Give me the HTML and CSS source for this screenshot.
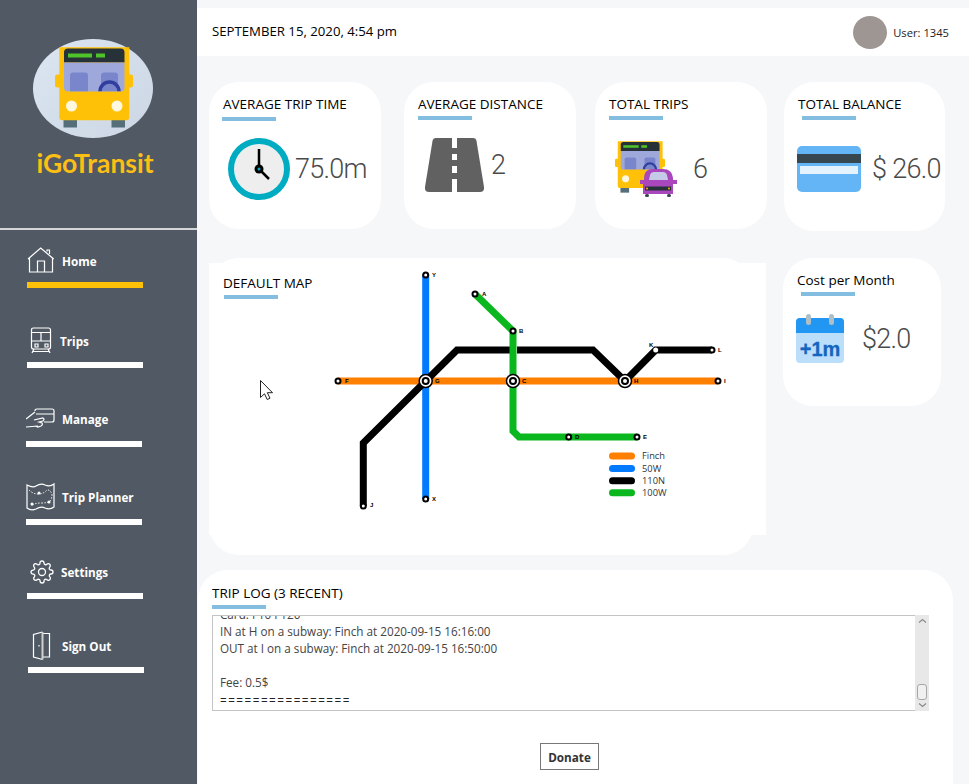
FILE: index.html
```html
<!DOCTYPE html>
<html lang="en">
<head>
<meta charset="utf-8">
<title>iGoTransit</title>
<link rel="stylesheet" href="styles.css">
</head>
<body>
<svg class="defs" width="0" height="0" aria-hidden="true">
  <defs>
    <clipPath id="bus-window"><path d="M64 63h60.500v25q0 4-4 4H68q-4 0-4-4z"/></clipPath>
    <symbol id="bus" viewBox="55 47.500 78 81">
      <rect x="55" y="75" width="8" height="13" rx="2" fill="#ffc107"/>
      <rect x="125" y="75" width="8" height="13" rx="2" fill="#ffc107"/>
      <rect x="63.500" y="118" width="13.500" height="10" fill="#546e7a"/>
      <rect x="111.500" y="118" width="13.500" height="10" fill="#546e7a"/>
      <path d="M59.300 47.700h70v70q0 3-3 3h-64q-3 0-3-3z" fill="#ffc107"/>
      <path d="M64 63v-10q0-4 4-4h52.500q4 0 4 4v10z" fill="#263238"/>
      <rect x="68" y="54" width="24" height="4" fill="#4ec32a"/>
      <rect x="96" y="54" width="9" height="4" fill="#4ec32a"/>
      <path d="M64 63h60.500v25q0 4-4 4H68q-4 0-4-4z" fill="#9fa8da"/>
      <g clip-path="url(#bus-window)">
        <rect x="70" y="73" width="18" height="24" rx="3" fill="#7986cb"/>
        <rect x="101" y="73" width="17" height="24" rx="3" fill="#7986cb"/>
        <circle cx="109.500" cy="92" r="9.500" fill="none" stroke="#303f9f" stroke-width="3.500"/>
      </g>
      <circle cx="71.500" cy="106.500" r="5.500" fill="#fff8e1"/>
      <circle cx="117" cy="106.500" r="5.500" fill="#fff8e1"/>
    </symbol>
  </defs>
</svg>

<div class="app">
  <aside class="sidebar">
    <div class="brand">
      <div class="logo-disc">
        <svg class="logo-bus" width="78" height="81"><use href="#bus"/></svg>
      </div>
      <div class="brand-name">iGoTransit</div>
    </div>
    <nav class="nav">
      <a class="nav-item nav-item--home">
        <span class="nav-row">
          <svg class="nav-icon" viewBox="0 0 30 30" width="30" height="30"><path d="M1 13 13.700 2 26.700 13M2.500 12V26h23V12M10.500 26V15h7v11M20 5.500V4h2.500v4"/></svg>
          <span class="nav-label">Home</span>
        </span>
        <span class="nav-bar nav-bar--active"></span>
      </a>
      <a class="nav-item nav-item--trips">
        <span class="nav-row">
          <svg class="nav-icon" viewBox="0 0 30 30" width="30" height="30"><path d="M6.500 2h15q2 0 2 2v17q0 2-2 2h-15q-2 0-2-2V4q0-2 2-2zM4.500 6.500h19M4.500 15h19M14 6.500V15M8 18h3v3H8zM18 18h3v3h-3zM7 23l-2 4M21 23l2 4M6 25.500h16"/></svg>
          <span class="nav-label nav-label--tight">Trips</span>
        </span>
        <span class="nav-bar"></span>
      </a>
      <a class="nav-item nav-item--manage">
        <span class="nav-row nav-row--lift">
          <svg class="nav-icon" viewBox="0 0 30 30" width="30" height="30"><path d="M0 15 9 8M9 7q0-2 2-2h15q2 0 2 2v9q0 2-2 2H18M10 10h18M0 23l12-1M8 16l9-2q2 1 0 3l-4 1 3 1q1 2-1 3l-3 1-3-1"/></svg>
          <span class="nav-label nav-label--wide">Manage</span>
        </span>
        <span class="nav-bar"></span>
      </a>
      <a class="nav-item nav-item--planner">
        <span class="nav-row nav-row--lift">
          <svg class="nav-icon" viewBox="0 0 30 30" width="30" height="30"><path d="M1 3q6 3 9 1 5-3 9-1 5 2 9-1v23q-4 3-9 1-4-2-9 1-5 2-9-1z"/><path class="nav-dots" d="M3 8q4 4 9 4t8-3 6 3q0 5-2 7t-9 2-10 3"/><circle class="nav-dot" cx="13" cy="11" r="1.500"/><circle class="nav-dot" cx="6" cy="22" r="1.500"/><circle class="nav-dot" cx="23" cy="20" r="1.500"/></svg>
          <span class="nav-label nav-label--wide">Trip Planner</span>
        </span>
        <span class="nav-bar"></span>
      </a>
      <a class="nav-item nav-item--settings">
        <span class="nav-row">
          <svg class="nav-icon nav-icon--gear" viewBox="-3 -3 30 30" width="30" height="30"><circle cx="12" cy="12" r="3.500"/><path d="M19.400 15a1.650 1.650 0 0 0 .33 1.820l.06.06a2 2 0 0 1 0 2.830 2 2 0 0 1-2.830 0l-.06-.06a1.650 1.650 0 0 0-1.820-.33 1.650 1.650 0 0 0-1 1.510V21a2 2 0 0 1-2 2 2 2 0 0 1-2-2v-.09A1.650 1.650 0 0 0 9 19.400a1.650 1.650 0 0 0-1.820.33l-.06.06a2 2 0 0 1-2.830 0 2 2 0 0 1 0-2.830l.06-.06a1.650 1.650 0 0 0 .33-1.820 1.650 1.650 0 0 0-1.510-1H3a2 2 0 0 1-2-2 2 2 0 0 1 2-2h.09A1.650 1.650 0 0 0 4.600 9a1.650 1.650 0 0 0-.33-1.820l-.06-.06a2 2 0 0 1 0-2.830 2 2 0 0 1 2.830 0l.06.06a1.650 1.650 0 0 0 1.820.33H9a1.650 1.650 0 0 0 1-1.510V3a2 2 0 0 1 2-2 2 2 0 0 1 2 2v.09a1.650 1.650 0 0 0 1 1.510 1.650 1.650 0 0 0 1.820-.33l.06-.06a2 2 0 0 1 2.830 0 2 2 0 0 1 0 2.830l-.06.06a1.650 1.650 0 0 0-.33 1.820V9a1.650 1.650 0 0 0 1.510 1H21a2 2 0 0 1 2 2 2 2 0 0 1-2 2h-.09a1.650 1.650 0 0 0-1.510 1z"/></svg>
          <span class="nav-label nav-label--snug">Settings</span>
        </span>
        <span class="nav-bar"></span>
      </a>
      <a class="nav-item nav-item--signout">
        <span class="nav-row">
          <svg class="nav-icon" viewBox="0 0 30 30" width="30" height="30"><path d="M14.500 1 5.500 3.500V26l9 2.500M15 2.500h6.500V26H15M11 14v1.500"/><path class="nav-thick" d="M14.500 1V28.500"/></svg>
          <span class="nav-label nav-label--snug">Sign Out</span>
        </span>
        <span class="nav-bar"></span>
      </a>
    </nav>
  </aside>

  <main class="main">
    <header class="topbar">
      <span class="date">SEPTEMBER 15, 2020, 4:54 pm</span>
      <span class="avatar"></span>
      <span class="user">User: 1345</span>
    </header>

    <section class="stats">
      <article class="card card--time">
        <h2 class="card-title">AVERAGE TRIP TIME</h2>
        <div class="rule rule--time"></div>
        <div class="card-body body--time">
          <svg viewBox="0 0 62 62" width="62" height="62">
            <circle cx="31" cy="31" r="28" fill="#eeeeee" stroke="#00acc1" stroke-width="6"/>
            <path d="M31 31V11M31 31 41 41" stroke="#000" stroke-width="2.500" fill="none"/>
            <circle cx="31" cy="31" r="4.500" fill="#000"/>
            <circle cx="31" cy="31" r="1.500" fill="#00acc1"/>
          </svg>
          <span class="value">75.0m</span>
        </div>
      </article>
      <article class="card card--dist">
        <h2 class="card-title">AVERAGE DISTANCE</h2>
        <div class="rule"></div>
        <div class="card-body body--dist">
          <svg viewBox="0 0 59 54" width="59" height="54">
            <path d="M11 0H48q3 0 3.500 3L59 49q.5 5-4 5H4q-4.500 0-4-5L7.500 3Q8 0 11 0z" fill="#616161"/>
            <path d="M27 0h5v10h-5zM27 16h5v6h-5zM27 28h5v7h-5zM27 41h5v13h-5z" fill="#fff"/>
          </svg>
          <span class="value">2</span>
        </div>
      </article>
      <article class="card card--trips">
        <h2 class="card-title">TOTAL TRIPS</h2>
        <div class="rule"></div>
        <div class="card-body body--trips">
          <svg viewBox="0 0 62 56" width="62" height="56">
            <use href="#bus" width="50" height="52"/>
            <path d="M29 39V37q0-9 9-9h10q9 0 10 9v2z" fill="#ab47bc"/>
            <path d="M34 39l1-5q1-3 4-3h9q3 0 4 3l1 5z" fill="#c5cae9"/>
            <rect x="25" y="39" width="37" height="4" fill="#ab47bc"/>
            <rect x="28" y="41" width="30" height="12" fill="#ab47bc"/>
            <rect x="30" y="45.500" width="26" height="4" fill="#263238"/>
            <circle cx="32" cy="47.500" r="1" fill="#ffb300"/>
            <circle cx="54" cy="47.500" r="1" fill="#ffb300"/>
            <rect x="30" y="53" width="4" height="3" rx="1.500" fill="#37474f"/>
            <rect x="52" y="53" width="4" height="3" rx="1.500" fill="#37474f"/>
          </svg>
          <span class="value">6</span>
        </div>
      </article>
      <article class="card card--balance">
        <h2 class="card-title">TOTAL BALANCE</h2>
        <div class="rule rule--inset"></div>
        <div class="card-body body--balance">
          <svg viewBox="0 0 64 46" width="64" height="46">
            <rect width="64" height="46" rx="5" fill="#64b5f6"/>
            <rect y="8" width="64" height="9" fill="#37474f"/>
            <rect x="3" y="20" width="58" height="8" fill="#e3f2fd"/>
          </svg>
          <span class="value">$ 26.0</span>
        </div>
      </article>
    </section>

    <section class="middle">
      <article class="card card--map">
        <h2 class="card-title">DEFAULT MAP</h2>
        <div class="rule rule--map"></div>
        <svg class="map" viewBox="0 0 557 272" width="557" height="272">
          <g transform="translate(-209 -263)" fill="none" stroke-linejoin="miter">
            <path d="M425.700 275V499" stroke="#007bff" stroke-width="7"/>
            <path d="M338 381H718" stroke="#ff7f00" stroke-width="7"/>
            <path d="M363.300 506V443L457 350H593L625 381 655.700 350H712" stroke="#000" stroke-width="7"/>
            <path d="M510 346h7v8h-7z" fill="#fff" stroke="none"/>
            <path d="M475 294 513 331V431L519 437H637" stroke="#0ab71e" stroke-width="7"/>
            <g fill="#fff" stroke="#000" stroke-width="2">
              <circle cx="425.700" cy="275" r="2.500"/>
              <circle cx="425.700" cy="499" r="2.500"/>
              <circle cx="475" cy="294" r="2.500"/>
              <circle cx="513" cy="331" r="2.500"/>
              <circle cx="338" cy="381" r="2.500"/>
              <circle cx="363.300" cy="506" r="2.500"/>
              <circle cx="712" cy="350" r="2.500"/>
              <circle cx="718" cy="381" r="2.500"/>
              <circle cx="568.700" cy="437" r="2.500"/>
              <circle cx="637" cy="437" r="2.500"/>
            </g>
            <circle cx="655.700" cy="350" r="2.500" fill="#fff"/>
            <g fill="#fff" stroke="#000">
              <circle cx="425.700" cy="381" r="6.500" stroke-width="1.500"/>
              <circle cx="513" cy="381" r="6.500" stroke-width="1.500"/>
              <circle cx="625" cy="381" r="6.500" stroke-width="1.500"/>
              <circle cx="425.700" cy="381" r="3" stroke-width="2"/>
              <circle cx="513" cy="381" r="3" stroke-width="2"/>
              <circle cx="625" cy="381" r="3" stroke-width="2"/>
            </g>
            <g class="station-label">
              <text x="432" y="276.500">Y</text>
              <text x="482" y="296">A</text>
              <text x="519" y="333">B</text>
              <text x="345" y="383">F</text>
              <text x="435" y="383">G</text>
              <text x="522" y="383">C</text>
              <text x="634" y="383">H</text>
              <text x="370" y="507">J</text>
              <text x="432" y="501">X</text>
              <text x="718" y="352">L</text>
              <text x="724" y="383">I</text>
              <text x="575" y="439">D</text>
              <text x="643" y="439">E</text>
              <text x="649" y="347">K</text>
            </g>
            <g stroke-width="7" stroke-linecap="round">
              <path d="M612.500 456H631.500" stroke="#ff7f00"/>
              <path d="M612.500 468.500H631.500" stroke="#007bff"/>
              <path d="M612.500 480.700H631.500" stroke="#000"/>
              <path d="M612.500 492.700H631.500" stroke="#0ab71e"/>
            </g>
            <g class="legend-label">
              <text x="642" y="459">Finch</text>
              <text x="642" y="471.500">50W</text>
              <text x="642" y="484">110N</text>
              <text x="642" y="496">100W</text>
            </g>
            <path d="M260.500 380.500V397.500L264.500 393.800 267.200 399.500 270 398.200 267.300 392.700H272.500z" fill="#fff" stroke="#222" stroke-width="1" stroke-linejoin="round"/>
          </g>
        </svg>
      </article>
      <article class="card card--cost">
        <h2 class="card-title">Cost per Month</h2>
        <div class="rule rule--inset"></div>
        <div class="card-body body--cost">
          <svg viewBox="0 0 48 49" width="48" height="49">
            <path d="M4 4H44q4 0 4 4V45q0 4-4 4H4q-4 0-4-4V8q0-4 4-4z" fill="#bbdefb"/>
            <path d="M4 4H44q4 0 4 4V19H0V8q0-4 4-4z" fill="#2196f3"/>
            <rect x="10" y="0" width="5" height="11" rx="2.500" fill="#b0bec5"/>
            <rect x="33" y="0" width="5" height="11" rx="2.500" fill="#b0bec5"/>
            <text class="cal-text" x="24" y="42" text-anchor="middle">+1m</text>
          </svg>
          <span class="value">$2.0</span>
        </div>
      </article>
    </section>

    <section class="log">
      <h2 class="card-title">TRIP LOG (3 RECENT)</h2>
      <div class="rule"></div>
      <div class="log-box">
        <div class="log-text">
          <div class="log-line log-line--clipped">Card: F10 F120</div>
          <div class="log-line">IN at H on a subway: Finch at 2020-09-15 16:16:00</div>
          <div class="log-line">OUT at I on a subway: Finch at 2020-09-15 16:50:00</div>
          <div class="log-line">&nbsp;</div>
          <div class="log-line">Fee: 0.5$</div>
          <div class="log-line log-line--rule">================</div>
        </div>
        <div class="scrollbar">
          <svg viewBox="0 0 13 12" width="13" height="12"><path d="M3 7.500 6.500 4.500 10 7.500" fill="none" stroke="#8a8a8a" stroke-width="1.200"/></svg>
          <div class="scroll-thumb"></div>
          <svg viewBox="0 0 13 11" width="13" height="11"><path d="M3 3.500 6.500 6.500 10 3.500" fill="none" stroke="#8a8a8a" stroke-width="1.200"/></svg>
        </div>
      </div>
      <div class="log-actions"><button class="donate" type="button">Donate</button></div>
    </section>
  </main>
</div>
</body>
</html>
```

FILE: styles.css
```css
* { box-sizing: border-box; }
html, body { margin: 0; height: 100%; }
body {
  width: 969px;
  height: 784px;
  overflow: hidden;
  background: #f6f7f9;
  font-family: "Open Sans", "Noto Sans", sans-serif;
  color: #000;
}
.defs { position: absolute; }
.app { display: flex; height: 784px; }

/* Sidebar */
.sidebar {
  width: 197px;
  flex: none;
  background: #515a64;
  display: flex;
  flex-direction: column;
}
.brand {
  height: 230px;
  border-bottom: 2px solid #d4d6d8;
  display: flex;
  flex-direction: column;
  align-items: center;
  padding-top: 39px;
  padding-right: 7px;
}
.logo-disc {
  width: 120px;
  height: 99px;
  margin-right: 4px;
  border-radius: 50%;
  background: linear-gradient(135deg, #dbe6f2, #ccd6e4);
  display: flex;
  justify-content: center;
  padding-top: 8px;
  padding-left: 2px;
}
.brand-name {
  margin-top: 8px;
  font-family: Lato, sans-serif;
  font-weight: 700;
  font-size: 26.500px;
  line-height: 34px;
  color: #fdbf13;
}
.nav { display: flex; flex-direction: column; }
.nav-item { display: flex; flex-direction: column; justify-content: flex-end; width: 116px; }
.nav-item--home { height: 58px; margin-left: 27px; }
.nav-item--trips { height: 80px; margin-left: 27px; }
.nav-item--manage { height: 79px; margin-left: 26px; }
.nav-item--planner { height: 78px; margin-left: 26px; }
.nav-item--settings { height: 74px; margin-left: 27px; }
.nav-item--signout { height: 74px; margin-left: 28px; }
.nav-row { display: flex; align-items: center; gap: 5px; height: 42px; }
.nav-row--lift { padding-bottom: 2px; }
.nav-icon { flex: none; fill: none; stroke: #fff; stroke-width: 1.200; }
.nav-icon--gear { stroke-width: 1.300; }
.nav-dots { stroke-dasharray: 1.500 1.500; stroke-width: 1; }
.nav-dot { fill: #fff; stroke: none; }
.nav-thick { stroke: #d0d0d0; stroke-width: 2; }
.nav-label { font-size: 11.700px; font-weight: 700; color: #fff; line-height: 17px; white-space: nowrap; }
.nav-label--tight { margin-left: -2px; }
.nav-label--snug { margin-left: -1px; }
.nav-label--wide { margin-left: 1px; }
.nav-bar { display: block; height: 6px; background: #fff; }
.nav-bar--active { background: #ffc107; }

/* Main */
.main { flex: 1; min-width: 0; display: flex; flex-direction: column; }
.topbar {
  margin-top: 8px;
  height: 48px;
  flex: none;
  background: #fff;
  display: flex;
  align-items: center;
  padding-left: 15px;
  padding-right: 20px;
}
.date { font-size: 13.200px; flex: 1; margin-bottom: 2px; }
.avatar { width: 34px; height: 33px; border-radius: 50%; background: #9e9693; margin-right: 6px; }
.user { font-size: 11.200px; color: #222; }

.stats { display: flex; align-items: flex-start; margin-top: 26px; padding-left: 12px; flex: none; }
.card { background: #fff; border-radius: 30px; padding-top: 12px; padding-left: 14px; }
.card--time, .card--dist, .card--trips { width: 172px; height: 147px; }
.card--dist { margin-left: 23px; }
.card--trips { margin-left: 19px; }
.card--balance { width: 161px; height: 149px; margin-left: 17px; }
.card-title { margin: 0; font-size: 13.500px; font-weight: 400; line-height: 20px; white-space: nowrap; }
.rule { width: 54px; height: 4px; margin-top: 2px; background: #83bddf; }
.rule--time { margin-left: -1px; margin-top: 3px; }
.rule--inset { margin-left: 4px; }
.rule--map { margin-left: 1px; }
.card-body { display: flex; align-items: center; }
.card-body svg { flex: none; }
.value { font-family: Roboto, sans-serif; font-weight: 300; font-size: 27px; letter-spacing: -0.700px; line-height: 34px; color: #4a4a4a; white-space: nowrap; }
.body--time { margin-top: 17px; margin-left: 5px; gap: 5px; }
.body--dist { margin-top: 18px; margin-left: 7px; gap: 7px; }
.body--trips { margin-top: 21px; margin-left: 6px; gap: 16px; }
.body--balance { margin-top: 26px; margin-left: -1px; gap: 11px; }
.body--cost { margin-top: 18px; margin-left: -1px; gap: 18px; }

.middle { display: flex; align-items: flex-start; margin-top: 27px; padding-left: 12px; flex: none; }
.card--map { position: relative; width: 544px; height: 297px; padding-top: 15px; }
.card--map .card-title, .card--map .rule { position: relative; z-index: 1; }
.map { position: absolute; left: 0; top: 5px; background: #fff; }
.station-label { font-family: "Liberation Sans", sans-serif; font-size: 6px; font-weight: 700; fill: #000; }
.legend-label { font-size: 9.300px; fill: #333; }
.card--cost { width: 158px; height: 148px; margin-left: 30px; }
.cal-text { font-family: "Liberation Sans", sans-serif; font-weight: 700; font-size: 20px; fill: #1565c0; stroke: #1565c0; stroke-width: 0.300px; }

.log {
  margin-top: 15px;
  margin-left: 1px;
  width: 755px;
  flex: 1;
  background: #fff;
  border-radius: 30px 30px 0 0;
  padding-top: 13px;
  padding-left: 14px;
}
.log-box { display: flex; width: 717px; height: 96px; margin-top: 6px; }
.log-text {
  flex: 1;
  border: 1px solid #c4c4c4;
  border-right: 0;
  overflow: hidden;
  padding-left: 7px;
  padding-top: 6px;
}
.log-line { font-size: 11.700px; line-height: 17px; color: #444; white-space: nowrap; }
.log-line--clipped { margin-top: -16px; }
.log-line--rule { margin-top: 1px; letter-spacing: 1.500px; color: #222; }
.scrollbar { width: 14px; background: #e8e8e8; display: flex; flex-direction: column; align-items: center; }
.scroll-thumb { width: 10px; height: 16px; margin-top: auto; background: #f0f0f0; border: 1px solid #a8a8a8; border-radius: 3px; }
.log-actions { display: flex; justify-content: center; margin-top: 32px; padding-right: 2px; width: 717px; }
.donate {
  width: 59px;
  height: 27px;
  padding: 0;
  background: #fff;
  border: 1px solid #777;
  font-family: inherit;
  font-size: 11.700px;
  font-weight: 700;
  color: #333;
}
```
